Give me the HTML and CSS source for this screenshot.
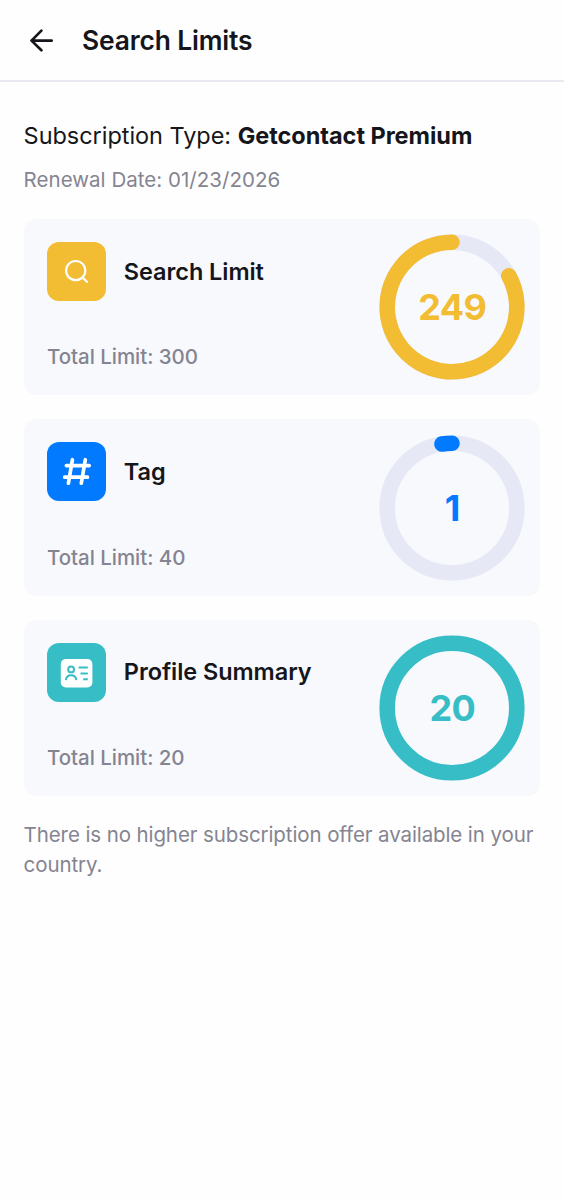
FILE: index.html
```html
<!DOCTYPE html>
<html lang="en">
<head>
<meta charset="utf-8">
<title>Search Limits</title>
<link rel="stylesheet" href="styles.css">
</head>
<body>
<header class="bar">
  <svg class="back" viewBox="0 0 24 24"><path d="M22.7 12.6H2.5M12.4 2.6 2.5 12.6l9.9 9.6"/></svg>
  <h1 class="title">Search Limits</h1>
</header>
<main class="content">
  <p class="plan">Subscription Type: <b class="plan-name">Getcontact Premium</b></p>
  <p class="renewal">Renewal Date: 01/23/2026</p>
  <section class="cards">
    <article class="card yellow">
      <div class="info">
        <div class="head">
          <svg class="icon" viewBox="0 0 59 59"><g class="thin"><circle cx="28.7" cy="28.6" r="9.6"/><path d="m35.6 35.6 4.4 4.2"/></g></svg>
          <h2 class="name">Search Limit</h2>
        </div>
        <p class="total">Total Limit: 300</p>
      </div>
      <div class="gauge">
        <svg class="ring" viewBox="0 0 146 146"><circle class="track" cx="73" cy="73" r="64.8"/><path class="value" d="M73 8.2A64.8 64.8 0 1 0 129.8 41.8"/></svg>
        <span class="count">249</span>
      </div>
    </article>
    <article class="card blue">
      <div class="info">
        <div class="head">
          <svg class="icon" viewBox="0 0 59 59"><g class="thick"><path d="M25.4 17.7 21.4 41.2M38.3 17.7 34.3 41.2M19.4 23.6H42.2M17.7 35.2H40.5"/></g></svg>
          <h2 class="name">Tag</h2>
        </div>
        <p class="total">Total Limit: 40</p>
      </div>
      <div class="gauge">
        <svg class="ring" viewBox="0 0 146 146"><circle class="track" cx="73" cy="73" r="64.8"/><path class="value" d="M73 8.2A64.8 64.8 0 0 0 62.9 9"/></svg>
        <span class="count">1</span>
      </div>
    </article>
    <article class="card teal">
      <div class="info">
        <div class="head">
          <svg class="icon" viewBox="0 0 59 59"><rect class="badge" x="13.8" y="16" width="31.6" height="28.4" rx="5"/><g class="person"><circle cx="24.1" cy="26.4" r="2.9"/><path d="M18.9 37.2c.3-3.2 2.2-4.9 5.2-4.9s4.9 1.7 5.2 4.9M31.6 24.6h9.2M33.5 30.4h7.3M36.2 36.2h4.6"/></g></svg>
          <h2 class="name">Profile Summary</h2>
        </div>
        <p class="total">Total Limit: 20</p>
      </div>
      <div class="gauge">
        <svg class="ring" viewBox="0 0 146 146"><circle class="value" cx="73" cy="73" r="64.8"/></svg>
        <span class="count">20</span>
      </div>
    </article>
  </section>
  <p class="note">There is no higher subscription offer available in your country.</p>
</main>
</body>
</html>
```
FILE: styles.css
```css
* { box-sizing: border-box; margin: 0; padding: 0; }
body { background: #fefefe; color: #15161b; font-family: Inter, sans-serif; }
svg { display: block; flex: none; fill: none; }
.bar { display: flex; align-items: center; gap: 29px; height: 82px; padding-left: 29px; border-bottom: 2px solid #e8e9f2; }
.back { width: 24px; height: 24px; stroke: #15161b; stroke-width: 2.7; stroke-linecap: round; stroke-linejoin: round; }
.title { font-size: 26.4px; font-weight: 600; line-height: 32px; letter-spacing: -0.15px; }
.content { padding: 38px 24px 0 23.6px; }
.plan { font-size: 23.5px; line-height: 32px; letter-spacing: -0.04px; white-space: nowrap; }
.plan-name { font-weight: 700; }
.renewal { margin-top: 16px; font-size: 20.5px; line-height: 24px; letter-spacing: 0.03px; color: #858491; }
.cards { display: grid; gap: 24px; margin-top: 27px; }
.card { display: flex; justify-content: space-between; height: 176.4px; padding: 15.3px 14.8px 15px 23.4px; border-radius: 12px; background: #f8f9fd; }
.info { padding-top: 7.8px; }
.head { display: flex; align-items: center; gap: 17.8px; }
.icon { width: 59px; height: 59px; border-radius: 12px; background: var(--accent); }
.name { font-size: 23.5px; font-weight: 600; line-height: 30px; letter-spacing: -0.06px; white-space: nowrap; }
.total { margin-top: 43.2px; font-size: 20.5px; font-weight: 450; line-height: 26px; letter-spacing: -0.04px; color: #858491; }
.gauge { display: grid; place-items: center; width: 146px; height: 146px; }
.ring, .count { grid-area: 1 / 1; }
.ring { width: 146px; height: 146px; stroke-width: 15.6; stroke-linecap: round; }
.track { stroke: #e6e9f5; }
.value { stroke: var(--accent); }
.count { font-size: 36px; font-weight: 700; line-height: 44px; letter-spacing: -0.7px; color: var(--accent); }
.yellow { --accent: #f2bc33; }
.blue { --accent: #027aff; }
.teal { --accent: #37bdc6; }
.thin { stroke: #fff; stroke-width: 2.2; stroke-linecap: round; }
.thick { stroke: #fff; stroke-width: 3.7; stroke-linecap: round; }
.badge { fill: #fff; }
.person { stroke: var(--accent); stroke-width: 2; }
.note { margin-top: 24px; font-size: 20.5px; line-height: 30px; letter-spacing: -0.1px; color: #858491; }
```
